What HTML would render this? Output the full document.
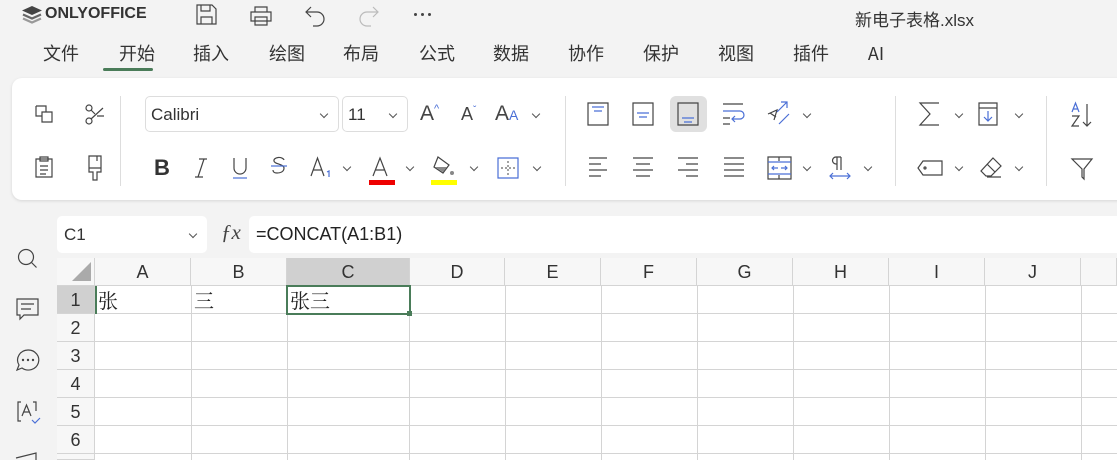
<!DOCTYPE html>
<html><head><meta charset="utf-8"><style>
*{margin:0;padding:0;box-sizing:border-box}
html,body{width:1117px;height:460px;overflow:hidden}
body{background:#f3f3f3;font-family:"Liberation Sans","Noto Sans CJK SC",sans-serif;color:#333;position:relative}
.a{position:absolute}
.tab{position:absolute;top:40px;height:26px;line-height:26px;font-size:18px;color:#333;transform:translateX(-50%);font-family:"Noto Sans CJK SC","Liberation Sans",sans-serif}
svg{position:absolute;overflow:visible}
svg *{fill:none;stroke:#444;stroke-width:1.2}
.b *{stroke:#4a6fd6}
.dd{position:absolute;width:6px;height:6px;border-right:1.3px solid #555;border-bottom:1.3px solid #555;transform:rotate(45deg)}
.ch{position:absolute;top:258px;height:28px;text-align:center;font-size:18px;line-height:28px;color:#333;border-right:1px solid #d4d4d4;background:#f7f7f7;border-bottom:1px solid #d4d4d4}
.rh{position:absolute;left:57px;width:38px;height:28px;text-align:center;font-size:18px;line-height:28px;color:#333;background:#f7f7f7;border-bottom:1px solid #d4d4d4;border-right:1px solid #d4d4d4}
.hl{position:absolute;left:95px;right:0;height:1px;background:#d4d4d4}
.vl{position:absolute;top:286px;height:174px;width:1px;background:#d4d4d4}
.cell{position:absolute;font-size:20px;top:286px;line-height:28px;font-family:"Noto Serif CJK SC","Liberation Serif",serif;color:#222}
</style></head><body>
<svg style="left:21px;top:5px" width="22" height="20"><path d="M11 1 L21 5.5 L11 10 L1 5.5Z" style="fill:#444;stroke:none"/><path d="M2 9.5 L11 13.5 L20 9.5" style="stroke:#666;stroke-width:2.2"/><path d="M2 13.5 L11 17.5 L20 13.5" style="stroke:#999;stroke-width:2.2"/></svg>
<div class="a" style="left:45px;top:5px;font-size:16px;font-weight:bold;color:#333">ONLYOFFICE</div>
<svg style="left:196px;top:4px" width="22" height="22"><path d="M1 1h15l4 4v15H1Z M5 1v6h9V1 M5 20v-7h11v7"/></svg>
<svg style="left:250px;top:6px" width="22" height="20"><path d="M5 6V1h12v5 M1 6h20v9H1Z M5 11h12v8H5Z"/></svg>
<svg style="left:305px;top:6px" width="22" height="20"><path d="M6 1L1 6l5 5 M1 6h11a7 7 0 0 1 0 14h-4"/></svg>
<svg style="left:358px;top:6px" width="22" height="20"><path d="M15 1l5 5-5 5 M20 6H9a7 7 0 0 0 0 14h4" style="stroke:#bbb"/></svg>
<div class="a" style="left:414px;top:13px;width:3px;height:3px;background:#444;border-radius:50%"></div>
<div class="a" style="left:421px;top:13px;width:3px;height:3px;background:#444;border-radius:50%"></div>
<div class="a" style="left:428px;top:13px;width:3px;height:3px;background:#444;border-radius:50%"></div>
<div class="a" style="left:855px;top:6px;font-size:17px;color:#333">新电子表格.xlsx</div>
<div class="tab" style="left:61px">文件</div><div class="tab" style="left:137px">开始</div><div class="tab" style="left:211px">插入</div><div class="tab" style="left:287px">绘图</div><div class="tab" style="left:361px">布局</div><div class="tab" style="left:437px">公式</div><div class="tab" style="left:511px">数据</div><div class="tab" style="left:586px">协作</div><div class="tab" style="left:661px">保护</div><div class="tab" style="left:736px">视图</div><div class="tab" style="left:811px">插件</div><div class="tab" style="left:876px">AI</div>
<div class="a" style="left:103px;top:68px;width:50px;height:3px;border-radius:2px;background:#4a7c59"></div>
<div class="a" style="left:12px;top:78px;width:1120px;height:122px;background:#fff;border-radius:10px;box-shadow:0 1px 3px rgba(0,0,0,.12)"></div>
<div class="a" style="left:120px;top:96px;width:1px;height:90px;background:#ddd"></div>
<div class="a" style="left:565px;top:96px;width:1px;height:90px;background:#ddd"></div>
<div class="a" style="left:895px;top:96px;width:1px;height:90px;background:#ddd"></div>
<div class="a" style="left:1046px;top:96px;width:1px;height:90px;background:#ddd"></div>
<svg style="left:35px;top:105px" width="18" height="18"><path d="M1 1h10v6 M1 1v10h6 M7 7h10v10H7Z"/></svg>
<svg style="left:85px;top:103px" width="20" height="22"><circle cx="4" cy="5" r="3"/><circle cx="4" cy="18" r="3"/><path d="M6 16L18 5 M6 7l4 4 M12 13h7"/></svg>
<svg style="left:35px;top:156px" width="18" height="22"><path d="M1 3h16v18H1Z M5 1h8v4H5Z M5 10h8 M5 14h8 M5 18h6"/></svg>
<svg style="left:88px;top:155px" width="16" height="26"><path d="M1 1h12v12H1Z M9 1v5 M1 13v4h4v8h4v-8h4v-4"/></svg>
<div class="a" style="left:145px;top:96px;width:194px;height:36px;border:1px solid #ddd;border-radius:5px;font-size:17px;padding:8px 5px">Calibri</div>
<div class="dd" style="left:321px;top:111px"></div>
<div class="a" style="left:342px;top:96px;width:66px;height:36px;border:1px solid #ddd;border-radius:5px;font-size:17px;padding:8px 5px">11</div>
<div class="dd" style="left:390px;top:111px"></div>
<div class="a" style="left:420px;top:102px;font-size:21px;color:#444">A<sup style="font-size:11px;color:#4a6fd6">^</sup></div>
<div class="a" style="left:461px;top:104px;font-size:18px;color:#444">A<sup style="font-size:10px;color:#4a6fd6">ˇ</sup></div>
<div class="a" style="left:495px;top:102px;font-size:21px;color:#444">A<span style="font-size:14px;color:#4a6fd6">A</span></div>
<div class="dd" style="left:533px;top:111px"></div>
<div class="a" style="left:154px;top:155px;font-size:22px;font-weight:bold;color:#333">B</div>
<svg style="left:194px;top:158px" width="14" height="20"><path d="M5 1h8 M1 19h8 M10 1L4 19"/></svg>
<svg style="left:232px;top:157px" width="16" height="22"><path d="M2 1v10a6 6 0 0 0 12 0V1"/><path d="M1 21h14" style="stroke:#4a6fd6"/></svg>
<svg style="left:270px;top:157px" width="18" height="20"><path d="M14 3a5 3 0 0 0-10 1c0 3 10 3 10 7s-4 5-7 5-4-1-4-3"/><path d="M1 9h16" style="stroke:#4a6fd6"/></svg>
<svg style="left:310px;top:157px" width="22" height="22"><path d="M1 19L7.5 1 14 19 M3.5 13h8"/><path d="M17 15l2-1v6" style="stroke:#4a6fd6"/></svg>
<div class="dd" style="left:344px;top:164px"></div>
<svg style="left:372px;top:157px" width="16" height="20"><path d="M1 19L8 1l7 18 M3.5 13h9"/></svg>
<div class="a" style="left:369px;top:180px;width:26px;height:5px;background:#e00"></div>
<div class="dd" style="left:407px;top:164px"></div>
<svg style="left:432px;top:156px" width="24" height="22"><path d="M6 1l11 8-6 8-9-6Z" style="stroke:#444"/><path d="M3 11l8 5 4-5Z" style="fill:#888;stroke:none"/><circle cx="20" cy="17" r="2" style="fill:#888;stroke:none"/></svg>
<div class="a" style="left:431px;top:180px;width:26px;height:5px;background:#ff0"></div>
<div class="dd" style="left:471px;top:164px"></div>
<svg class="b" style="left:497px;top:157px" width="22" height="22"><path d="M1 1h20v20H1Z"/><path d="M11 4v14 M4 11h14" style="stroke-dasharray:2 2;stroke:#666"/></svg>
<div class="dd" style="left:534px;top:164px"></div>
<svg style="left:587px;top:102px" width="22" height="24"><path d="M1 1h20v22H1Z"/><path d="M5 5h12 M7 9h8" style="stroke:#4a6fd6"/></svg>
<svg style="left:632px;top:102px" width="22" height="24"><path d="M1 1h20v22H1Z"/><path d="M5 11h12 M7 15h8" style="stroke:#4a6fd6"/></svg>
<div class="a" style="left:670px;top:96px;width:37px;height:36px;background:#e0e0e0;border-radius:6px"></div>
<svg style="left:677px;top:102px" width="22" height="24"><path d="M1 1h20v22H1Z"/><path d="M5 16h12 M7 20h8" style="stroke:#4a6fd6"/></svg>
<svg style="left:722px;top:103px" width="24" height="20"><path d="M1 1h20 M1 15h7 M1 21h7"/><path d="M1 8h17a4 4 0 0 1 0 8h-7 M13 13l-3 3 3 3" style="stroke:#4a6fd6"/></svg>
<svg style="left:767px;top:102px" width="24" height="24"><path d="M1 12l9-4-3 10 M3 11l6 4"/><path d="M10 10l10-10 M14 0h6v6 M12 22l10-10" style="stroke:#4a6fd6"/></svg>
<div class="dd" style="left:804px;top:111px"></div>
<svg style="left:588px;top:157px" width="22" height="20"><path d="M1 1h18 M1 7h12 M1 13h18 M1 19h12"/></svg>
<svg style="left:632px;top:157px" width="22" height="20"><path d="M1 1h20 M4 7h14 M1 13h20 M4 19h14"/></svg>
<svg style="left:677px;top:157px" width="22" height="20"><path d="M1 1h20 M9 7h12 M1 13h20 M9 19h12"/></svg>
<svg style="left:723px;top:157px" width="22" height="20"><path d="M1 1h20 M1 7h20 M1 13h20 M1 19h20"/></svg>
<svg style="left:767px;top:156px" width="26" height="24"><path d="M1 1h23v22H1Z M12 1v4 M12 19v4"/><path d="M1 6h23 M1 18h23 M5 12h6 M14 12h6 M7 10l-2 2 2 2 M18 10l2 2-2 2" style="stroke:#4a6fd6"/></svg>
<div class="dd" style="left:804px;top:164px"></div>
<svg style="left:829px;top:156px" width="22" height="24"><path d="M8 1v13 M12 1v13 M12 1H7a3 3 0 0 0 0 7h1"/><path d="M1 20h20 M4 17l-3 3 3 3 M18 17l3 3-3 3" style="stroke:#4a6fd6"/></svg>
<div class="dd" style="left:865px;top:164px"></div>
<svg style="left:919px;top:102px" width="22" height="24"><path d="M20 1H1l10 11L1 23h19"/></svg>
<div class="dd" style="left:956px;top:111px"></div>
<svg style="left:978px;top:102px" width="20" height="24"><path d="M1 1h18v22H1Z M1 6h18"/><path d="M10 9v10 M6 15l4 4 4-4" style="stroke:#4a6fd6"/></svg>
<div class="dd" style="left:1016px;top:111px"></div>
<svg style="left:917px;top:160px" width="26" height="16"><path d="M6 1h19v14H6L1 8Z"/><circle cx="8" cy="8" r="1"/></svg>
<div class="dd" style="left:956px;top:164px"></div>
<svg style="left:979px;top:156px" width="24" height="24"><path d="M14 2l8 8-10 10H7L2 15Z M8 8l8 8 M8 21h14"/></svg>
<div class="dd" style="left:1016px;top:164px"></div>
<svg style="left:1071px;top:102px" width="22" height="26"><path d="M1 10L4.5 1 8 10 M2.5 7h4" style="stroke:#4a6fd6"/><path d="M1 14h7L1 24h7 M16 2v22 M12 20l4 4 4-4"/></svg>
<svg style="left:1071px;top:158px" width="22" height="22"><path d="M1 1h20l-8 10v10l-2-2v-8Z"/></svg>
<svg style="left:17px;top:248px" width="22" height="22"><circle cx="9" cy="9" r="7.5"/><path d="M14.5 14.5l5 5"/></svg>
<svg style="left:16px;top:298px" width="24" height="24"><path d="M1 1h21v16H8l-4 4v-4H1Z M5 6h13 M5 11h10"/></svg>
<svg style="left:16px;top:349px" width="24" height="24"><path d="M12 1a10.5 10 0 1 1-6 18l-5 2 2-5A10.5 10 0 0 1 12 1Z"/><circle cx="7" cy="11" r=".6"/><circle cx="12" cy="11" r=".6"/><circle cx="17" cy="11" r=".6"/></svg>
<svg style="left:17px;top:401px" width="24" height="24"><path d="M4 1H1v19h3 M16 1h3v9 M5 15l4.5-11L14 15 M6.5 11h6"/><path d="M15 19l3 3 5-5" style="stroke:#4a6fd6"/></svg>
<svg style="left:15px;top:452px" width="24" height="10"><path d="M1 6l20-5v10"/></svg>
<div class="a" style="left:57px;top:216px;width:150px;height:37px;background:#fff;border-radius:5px;font-size:17px;padding:9px 7px">C1</div>
<div class="dd" style="left:190px;top:231px"></div>
<div class="a" style="left:221px;top:220px;font-size:21px;font-style:italic;font-family:'Liberation Serif',serif;color:#444">ƒx</div>
<div class="a" style="left:249px;top:216px;width:900px;height:37px;background:#fff;border-radius:5px;font-size:18px;padding:8px 7px;color:#222">=CONCAT(A1:B1)</div>
<div class="a" style="left:57px;top:258px;width:1060px;height:202px;background:#fff"></div>
<div class="a" style="left:57px;top:258px;width:38px;height:28px;background:#f7f7f7;border-right:1px solid #d4d4d4;border-bottom:1px solid #d4d4d4"></div>
<svg style="left:72px;top:262px" width="20" height="20"><path d="M19 0V19H0Z" style="fill:#aaa;stroke:none"/></svg>
<div class="ch" style="left:95px;width:96px">A</div>
<div class="ch" style="left:191px;width:96px">B</div>
<div class="ch" style="left:287px;width:123px;background:#d0d0d0">C</div>
<div class="ch" style="left:410px;width:95px">D</div>
<div class="ch" style="left:505px;width:96px">E</div>
<div class="ch" style="left:601px;width:96px">F</div>
<div class="ch" style="left:697px;width:96px">G</div>
<div class="ch" style="left:793px;width:96px">H</div>
<div class="ch" style="left:889px;width:96px">I</div>
<div class="ch" style="left:985px;width:96px">J</div>
<div class="ch" style="left:1081px;width:36px"></div>
<div class="rh" style="top:286px;background:#d0d0d0">1</div>
<div class="rh" style="top:314px">2</div>
<div class="rh" style="top:342px">3</div>
<div class="rh" style="top:370px">4</div>
<div class="rh" style="top:398px">5</div>
<div class="rh" style="top:426px">6</div>
<div class="rh" style="top:454px;height:6px"></div>
<div class="hl" style="top:313px"></div><div class="hl" style="top:341px"></div><div class="hl" style="top:369px"></div><div class="hl" style="top:397px"></div><div class="hl" style="top:425px"></div><div class="hl" style="top:453px"></div>
<div class="vl" style="left:191px"></div><div class="vl" style="left:287px"></div><div class="vl" style="left:409px"></div><div class="vl" style="left:505px"></div><div class="vl" style="left:601px"></div><div class="vl" style="left:697px"></div><div class="vl" style="left:793px"></div><div class="vl" style="left:889px"></div><div class="vl" style="left:985px"></div><div class="vl" style="left:1081px"></div>
<div class="a" style="left:95px;top:286px;width:2px;height:28px;background:#4a7c59"></div>
<div class="cell" style="left:98px">张</div>
<div class="cell" style="left:194px">三</div>
<div class="cell" style="left:290px">张三</div>
<div class="a" style="left:286px;top:285px;width:125px;height:30px;border:2px solid #4a7c59"></div>
<div class="a" style="left:407px;top:311px;width:5px;height:5px;background:#4a7c59"></div>
</body></html>
